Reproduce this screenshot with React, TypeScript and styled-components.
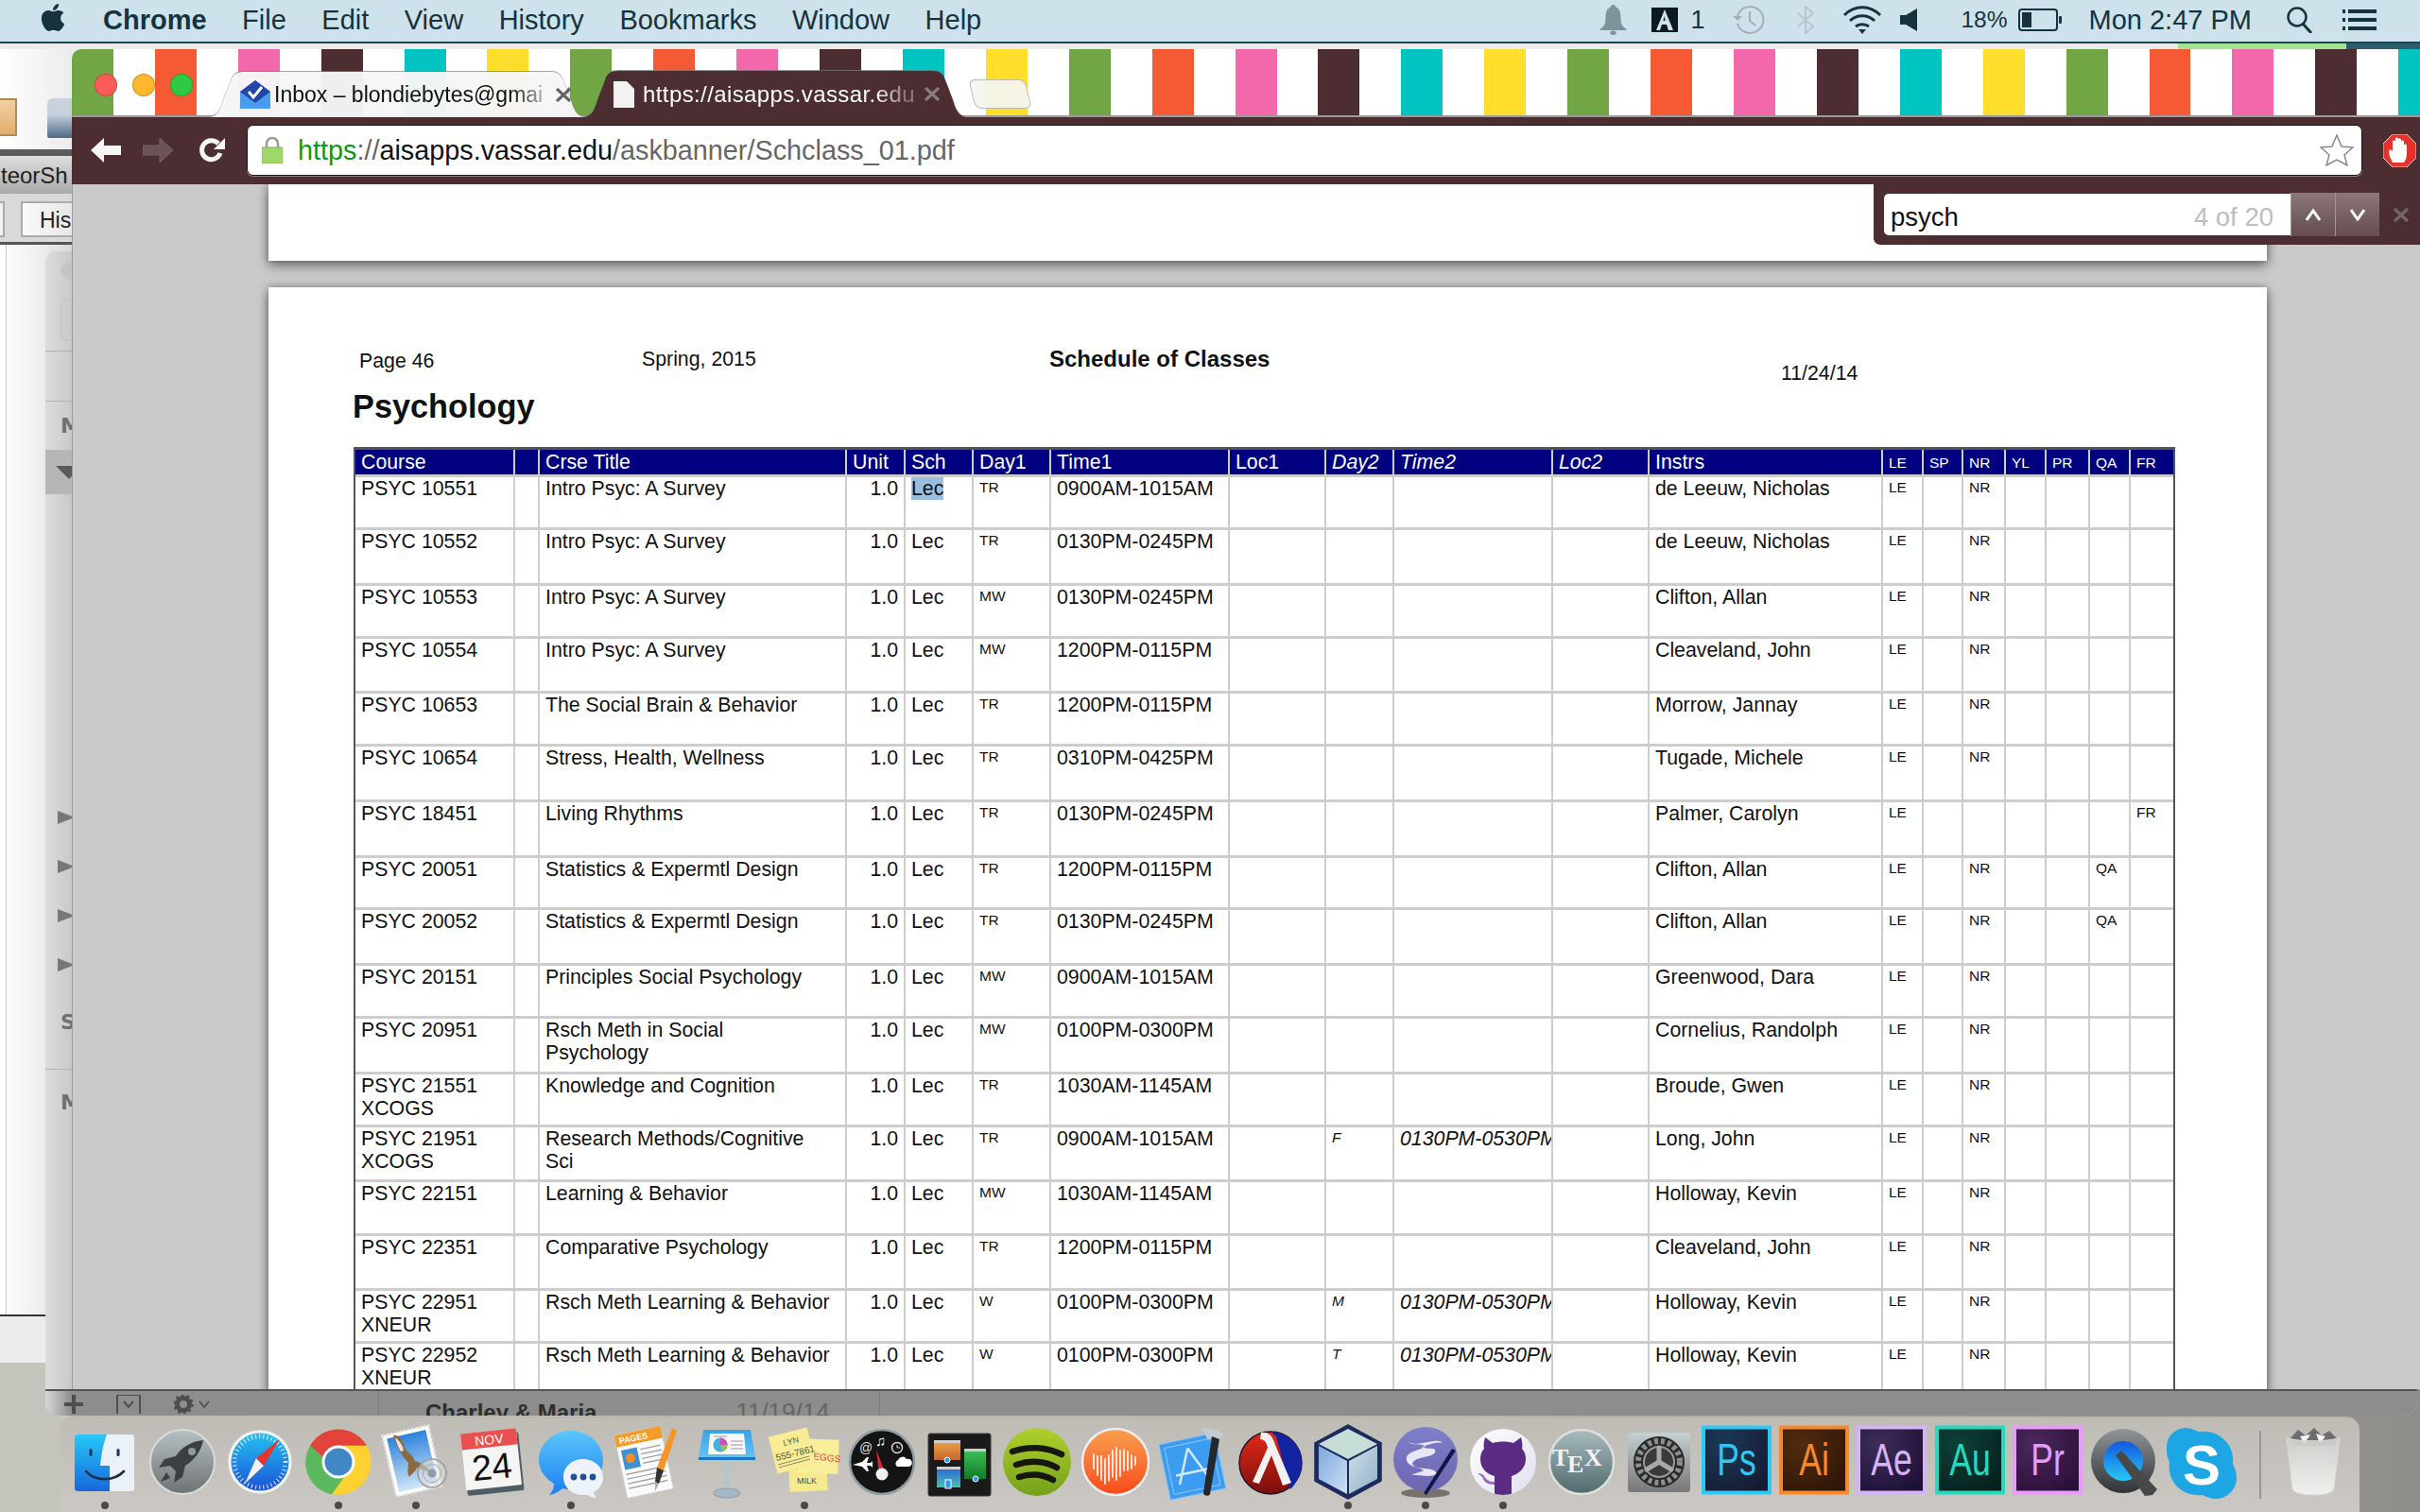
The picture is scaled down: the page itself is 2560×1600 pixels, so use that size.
import { ReactNode } from 'react';
import styled, { createGlobalStyle } from 'styled-components';
import { FaApple } from 'react-icons/fa';

const FONT = '"Liberation Sans", Arial, sans-serif';
const INK = '#16333d';
const PLUM = '#4b2d32';
const COLS = '169px 26px 325px 62px 72px 82px 189px 102px 72px 168px 102px 247px 43px 42px 45px 43px 46px 43px 45px';

type Course = {
  code: string;
  sub?: string;
  title: string;
  day: string;
  time: string;
  instr: string;
  h: number;
  day2?: string;
  time2?: string;
  nr?: boolean;
  qa?: boolean;
  fr?: boolean;
  picked?: boolean;
};

const COURSES: Course[] = [
  { code: 'PSYC 10551', title: 'Intro Psyc: A Survey', day: 'TR', time: '0900AM-1015AM', instr: 'de Leeuw, Nicholas', h: 56, picked: true },
  { code: 'PSYC 10552', title: 'Intro Psyc: A Survey', day: 'TR', time: '0130PM-0245PM', instr: 'de Leeuw, Nicholas', h: 59 },
  { code: 'PSYC 10553', title: 'Intro Psyc: A Survey', day: 'MW', time: '0130PM-0245PM', instr: 'Clifton, Allan', h: 56 },
  { code: 'PSYC 10554', title: 'Intro Psyc: A Survey', day: 'MW', time: '1200PM-0115PM', instr: 'Cleaveland, John', h: 58 },
  { code: 'PSYC 10653', title: 'The Social Brain & Behavior', day: 'TR', time: '1200PM-0115PM', instr: 'Morrow, Jannay', h: 56 },
  { code: 'PSYC 10654', title: 'Stress, Health, Wellness', day: 'TR', time: '0310PM-0425PM', instr: 'Tugade, Michele', h: 59 },
  { code: 'PSYC 18451', title: 'Living Rhythms', day: 'TR', time: '0130PM-0245PM', instr: 'Palmer, Carolyn', h: 59, nr: false, fr: true },
  { code: 'PSYC 20051', title: 'Statistics & Expermtl Design', day: 'TR', time: '1200PM-0115PM', instr: 'Clifton, Allan', h: 55, qa: true },
  { code: 'PSYC 20052', title: 'Statistics & Expermtl Design', day: 'TR', time: '0130PM-0245PM', instr: 'Clifton, Allan', h: 59, qa: true },
  { code: 'PSYC 20151', title: 'Principles Social Psychology', day: 'MW', time: '0900AM-1015AM', instr: 'Greenwood, Dara', h: 56 },
  { code: 'PSYC 20951', title: 'Rsch Meth in Social\nPsychology', day: 'MW', time: '0100PM-0300PM', instr: 'Cornelius, Randolph', h: 59 },
  { code: 'PSYC 21551', sub: 'XCOGS', title: 'Knowledge and Cognition', day: 'TR', time: '1030AM-1145AM', instr: 'Broude, Gwen', h: 56 },
  { code: 'PSYC 21951', sub: 'XCOGS', title: 'Research Methods/Cognitive\nSci', day: 'TR', time: '0900AM-1015AM', instr: 'Long, John', h: 58, day2: 'F', time2: '0130PM-0530PM' },
  { code: 'PSYC 22151', title: 'Learning & Behavior', day: 'MW', time: '1030AM-1145AM', instr: 'Holloway, Kevin', h: 57 },
  { code: 'PSYC 22351', title: 'Comparative Psychology', day: 'TR', time: '1200PM-0115PM', instr: 'Cleaveland, John', h: 58 },
  { code: 'PSYC 22951', sub: 'XNEUR', title: 'Rsch Meth Learning & Behavior', day: 'W', time: '0100PM-0300PM', instr: 'Holloway, Kevin', h: 56, day2: 'M', time2: '0130PM-0530PM' },
  { code: 'PSYC 22952', sub: 'XNEUR', title: 'Rsch Meth Learning & Behavior', day: 'W', time: '0100PM-0300PM', instr: 'Holloway, Kevin', h: 60, day2: 'T', time2: '0130PM-0530PM' },
];

const tabPath = (w: number, h: number) =>
  `path('M0 ${h} C10 ${h} 13 ${h - 8} 16 ${h - 18} L24 10 C26 3 30 0 38 0 L${w - 38} 0 C${w - 30} 0 ${w - 26} 3 ${w - 24} 10 L${w - 16} ${h - 18} C${w - 13} ${h - 8} ${w - 10} ${h} ${w} ${h} Z')`;

const GlobalStyle = createGlobalStyle`
  html, body { margin: 0; padding: 0; background: #b9b8b0; }
  * { box-sizing: border-box; }
`;

const Desktop = styled.div`
  position: relative;
  width: 2560px;
  height: 1600px;
  overflow: hidden;
  font-family: ${FONT};
  background: linear-gradient(90deg, #c6c5bd 0%, #b9b8b0 60%, #8e8d88 100%);
`;

const MenuBar = styled.header`
  position: relative;
  z-index: 5;
  display: flex;
  align-items: center;
  height: 46px;
  padding: 0 0 2px 42px;
  background: #cde2ea;
  border-bottom: 2px solid #1e4552;
  color: ${INK};
  font-size: 29px;
`;

const AppleMark = styled(FaApple)`
  width: 28px;
  height: 33px;
  margin: -6px 39px 0 0;
  color: ${INK};
`;

const MenuList = styled.nav`
  display: flex;
  gap: 37.5px;
`;

const MenuItem = styled.span<{ $bold?: boolean }>`
  font-weight: ${(p) => (p.$bold ? 700 : 400)};
`;

const Status = styled.div`
  display: flex;
  align-items: center;
  margin-left: auto;
  padding-right: 46px;
`;

const StatusSlot = styled.span<{ $ml: number; $size?: number }>`
  display: flex;
  align-items: center;
  margin-left: ${(p) => p.$ml}px;
  font-size: ${(p) => p.$size ?? 29}px;
`;

const PeekStrip = styled.div`
  position: absolute;
  top: 46px;
  left: 0;
  right: 0;
  height: 6px;
  display: flex;
  background: #2c5d6c;
`;

const PeekWhite = styled.div`
  width: 2304px;
  background: #ececec;
`;

const PeekGreen = styled.div`
  width: 178px;
  background: #a4e490;
`;

const BackWindow = styled.section`
  position: absolute;
  top: 52px;
  left: 0;
  width: 100px;
  height: 1390px;
  display: flex;
  flex-direction: column;
  background: linear-gradient(90deg, #fff, #e6e6e6);
`;

const BackIcons = styled.div`
  display: flex;
  gap: 32px;
  height: 106px;
  padding-top: 52px;
`;

const Folder = styled.div`
  width: 18px;
  height: 40px;
  border: 2px solid #b08a50;
  border-left: 0;
  background: linear-gradient(#f2cfa0, #e2ae70);
`;

const Bottle = styled.div`
  width: 30px;
  height: 42px;
  border-radius: 6px 6px 2px 2px;
  background: linear-gradient(#c7d2dc 40%, #4d6a86);
`;

const DarkRule = styled.div`
  height: 7px;
  background: #5c5c5c;
`;

const BackTitle = styled.div`
  height: 40px;
  line-height: 42px;
  overflow: hidden;
  white-space: nowrap;
  font-size: 24px;
  color: #222;
  background: linear-gradient(#dedede, #a9a9a9);
`;

const BackTitleText = styled.span`
  display: block;
  margin-left: 1px;
`;

const BackTabs = styled.div`
  display: flex;
  gap: 17px;
  height: 54px;
  padding-top: 8px;
  background: #d9d9d9;
  border-bottom: 3px solid #555;
`;

const BackTabStub = styled.div`
  width: 5px;
  height: 38px;
  background: #f1f1f1;
  border: 2px solid #aaa;
  border-left: 0;
`;

const BackTab = styled.div`
  width: 70px;
  height: 38px;
  padding-left: 18px;
  line-height: 36px;
  font-size: 23px;
  color: #222;
  background: linear-gradient(90deg, #fafafa, #e2e2e2);
  border: 2px solid #aaa;
`;

const BackBody = styled.div`
  flex: 1;
  margin-left: 6px;
  border-left: 1px dotted #c8c8c8;
  background: linear-gradient(90deg, #fdfdfd, #ededed 40%, #c8c8c8);
`;

const BackFoot = styled.div`
  height: 51px;
  border-top: 2px solid #333;
  background: #ececec;
`;

const SideWindow = styled.section`
  position: absolute;
  top: 266px;
  left: 48px;
  right: 3px;
  height: 1232px;
  display: flex;
  flex-direction: column;
  border-radius: 10px 10px 14px 14px;
  overflow: hidden;
  background: linear-gradient(90deg, #dcdcdc, #c9c9c9 28px);
`;

const SideRow = styled.div<{ $h: number; $line?: boolean; $active?: boolean }>`
  display: flex;
  align-items: center;
  height: ${(p) => p.$h}px;
  padding-left: 16px;
  font-family: "DejaVu Sans", sans-serif;
  font-weight: 700;
  font-size: 22px;
  color: #707070;
  border-bottom: ${(p) => (p.$line ? '1px solid #b2b2b2' : '0')};
  background: ${(p) => (p.$active ? '#b6b6b6' : 'transparent')};
`;

const SideOval = styled.div`
  width: 40px;
  height: 22px;
  border-radius: 50%;
  background: #c4c4c4;
`;

const SideField = styled.div`
  width: 40px;
  height: 43px;
  border: 1px solid #c0c0c0;
  border-radius: 6px;
`;

const ArrowDown = styled.div`
  width: 0;
  height: 0;
  margin-left: -5px;
  border-left: 14px solid transparent;
  border-right: 14px solid transparent;
  border-top: 14px solid #5a5a5a;
`;

const ArrowRight = styled.div`
  width: 0;
  height: 0;
  margin-left: -3px;
  border-top: 7px solid transparent;
  border-bottom: 7px solid transparent;
  border-left: 18px solid #777;
`;

const SideGap = styled.div`
  flex: 1;
`;

const SideFoot = styled.div`
  display: flex;
  align-items: flex-start;
  height: 28px;
  padding: 4px 0 0 20px;
  color: #4e4e4e;
  background: linear-gradient(90deg, #d8d8d8, #8d8d8d 28px);
  border-top: 2px solid #555;
`;

const FootIcons = styled.div`
  display: flex;
  align-items: center;
  gap: 35px;
  flex: none;
  width: 332px;
  height: 20px;
`;

const FootColumn = styled.div<{ $w: number }>`
  display: flex;
  align-items: baseline;
  gap: 147px;
  flex: none;
  width: ${(p) => p.$w}px;
  height: 30px;
  margin-top: -4px;
  padding: 7px 0 0 49px;
  border-left: 1px solid #7d7d7d;
  white-space: nowrap;
  font-size: 24px;
`;

const FootName = styled.b`
  color: #2e2e2e;
`;

const FootDate = styled.span`
  font-size: 26px;
  color: #666;
`;

const ChromeWindow = styled.main`
  position: absolute;
  top: 52px;
  left: 76px;
  width: 2484px;
  height: 1418px;
  display: flex;
  flex-direction: column;
  overflow: hidden;
  border-top-left-radius: 10px;
`;

const TabStrip = styled.div`
  display: flex;
  align-items: flex-end;
  height: 72px;
  flex: none;
  padding-left: 24px;
  box-shadow: inset 0 -2px #9b9b9b;
  background: repeating-linear-gradient(
    90deg,
    #72a544 0 44px, #fff 44px 87.9px,
    #f55a35 87.9px 131.9px, #fff 131.9px 175.8px,
    #f368ab 175.8px 219.8px, #fff 219.8px 263.7px,
    ${PLUM} 263.7px 307.7px, #fff 307.7px 351.6px,
    #00c4c2 351.6px 395.6px, #fff 395.6px 439.5px,
    #ffde2c 439.5px 483.5px, #fff 483.5px 527.4px
  );
`;

const Lights = styled.div`
  display: flex;
  gap: 16px;
  align-self: flex-start;
  margin: 26px 16px 0 0;
`;

const Light = styled.span<{ $c: string }>`
  width: 24px;
  height: 24px;
  border-radius: 50%;
  background: ${(p) => p.$c};
  box-shadow: inset 0 0 0 1px rgba(0, 0, 0, 0.2);
`;

const Tab = styled.div<{ $w: number; $on?: boolean }>`
  position: relative;
  display: flex;
  align-items: center;
  flex: none;
  width: ${(p) => p.$w}px;
  height: ${(p) => (p.$on ? 49 : 48)}px;
  margin-right: -4px;
  padding: 0 ${(p) => (p.$on ? 27 : 13)}px 0 ${(p) => (p.$on ? 33 : 34)}px;
  font-size: ${(p) => (p.$on ? 24 : 23)}px;
  letter-spacing: ${(p) => (p.$on ? 0.4 : 0)}px;
  color: ${(p) => (p.$on ? '#fff' : '#111')};
  filter: drop-shadow(0 -1px 0 rgba(120, 120, 120, 0.75));

  &::before {
    content: '';
    position: absolute;
    inset: 0;
    background: ${(p) => (p.$on ? PLUM : 'rgba(255, 255, 255, 0.9)')};
    clip-path: ${(p) => tabPath(p.$w, p.$on ? 49 : 48)};
  }
`;

const TabInner = styled.span<{ $gap: number }>`
  position: relative;
  display: flex;
  align-items: center;
  width: 100%;
  gap: ${(p) => p.$gap}px;
`;

const TabLabel = styled.span`
  flex: 1;
  overflow: hidden;
  white-space: nowrap;
  mask-image: linear-gradient(90deg, #000 86%, rgba(0, 0, 0, 0.35) 97%);
`;

const Cross = ({ color }: { color: string }) => (
  <svg width="22" height="15" viewBox="0 0 22 15" fill="none" stroke={color} strokeWidth="3.2">
    <path d="M4 1l14 13M18 1L4 14" />
  </svg>
);

const NewTab = styled.div`
  align-self: flex-start;
  width: 60px;
  height: 31px;
  margin: 32px 0 0 8px;
  border: 1px solid #bbb;
  border-radius: 7px;
  background: rgba(245, 245, 240, 0.94);
  transform: skewX(14deg);
`;

const Toolbar = styled.div`
  display: flex;
  align-items: center;
  flex: none;
  height: 71px;
  padding: 0 0 1px 20px;
  background: ${PLUM};
`;

const NavIcon = styled.svg<{ $ml: number }>`
  flex: none;
  margin-left: ${(p) => p.$ml}px;
`;

const Omnibox = styled.div`
  display: flex;
  align-items: center;
  flex: none;
  width: 2238px;
  height: 54px;
  margin-left: 23px;
  padding: 0 8px 0 15px;
  background: #fff;
  border-radius: 7px;
  border: 1px solid #1f1215;
  box-shadow: 0 1px 0 #8d7b7e;
  font-size: 28.8px;
`;

const UrlText = styled.span`
  margin-left: 16px;
  color: #666;
  white-space: nowrap;
`;

const UrlHttps = styled.span`
  color: #0a9a14;
`;

const UrlHost = styled.span`
  color: #111;
`;

const StarWrap = styled.svg`
  margin-left: auto;
`;

const Viewer = styled.div`
  position: relative;
  flex: 1;
  display: flex;
  flex-direction: column;
  gap: 28px;
  overflow: hidden;
  padding-left: 207px;
  background: #cacaca;
  border-left: 1px solid #9c9c9c;
`;

const FindBar = styled.div`
  position: absolute;
  z-index: 2;
  top: 0;
  right: 0;
  width: 578px;
  height: 64px;
  display: flex;
  align-items: center;
  padding-left: 11px;
  background: ${PLUM};
  border-bottom-left-radius: 7px;
`;

const FindField = styled.div`
  display: flex;
  align-items: center;
  justify-content: space-between;
  width: 430px;
  height: 44px;
  padding: 5px 18px 0 7px;
  font-size: 27.5px;
  color: #111;
  background: #fff;
  border-radius: 5px 0 0 5px;
`;

const FindCount = styled.span`
  color: #bdbdbd;
`;

const FindStep = styled.div`
  display: flex;
  align-items: center;
  justify-content: center;
  width: 47px;
  height: 46px;
  border-left: 1px solid #a59598;
  background: linear-gradient(#8b777a, #654c50);
`;

const FindClose = styled.span`
  display: flex;
  margin-left: 12px;
`;

const Page = styled.div<{ $h: number }>`
  flex: none;
  width: 2114px;
  height: ${(p) => p.$h}px;
  background: #fff;
  box-shadow: 0 5px 12px rgba(0, 0, 0, 0.42), 0 0 8px rgba(0, 0, 0, 0.3);
`;

const PageHead = styled.div`
  display: grid;
  grid-template-columns: 299px 431px 774px auto;
  height: 106px;
  padding: 64px 0 0 96px;
  font-size: 21.3px;
  line-height: 24px;
  color: #111;
`;

const HeadItem = styled.span<{ $down?: number; $bold?: boolean }>`
  margin-top: ${(p) => p.$down ?? 0}px;
  font-weight: ${(p) => (p.$bold ? 700 : 400)};
  font-size: ${(p) => (p.$bold ? 24 : 21.3)}px;
`;

const PageTitle = styled.h1`
  margin: 0 0 23px 89px;
  height: 40px;
  font-size: 34.3px;
  line-height: 40px;
  font-weight: 700;
  color: #111;
`;

const Table = styled.div`
  width: 1927px;
  margin-left: 90px;
  border: 2px solid #555;
  border-top-width: 3px;
  border-bottom: 0;
`;

const Row = styled.div<{ $h: number; $head?: boolean }>`
  display: grid;
  grid-template-columns: ${COLS};
  height: ${(p) => p.$h}px;
  border-bottom: 3px solid #cdcdcd;
  background: ${(p) => (p.$head ? '#000080' : '#fff')};
  color: ${(p) => (p.$head ? '#fff' : '#111')};
`;

const Cell = styled.div<{ $small?: boolean; $italic?: boolean; $right?: boolean; $drop?: number }>`
  overflow: hidden;
  padding: ${(p) => p.$drop ?? 0}px 6px 0 6px;
  border-right: 2px solid #cdcdcd;
  white-space: pre-line;
  font-size: ${(p) => (p.$small ? 15.5 : 21.3)}px;
  line-height: ${(p) => (p.$small ? 22 : 24)}px;
  font-style: ${(p) => (p.$italic ? 'italic' : 'normal')};
  text-align: ${(p) => (p.$right ? 'right' : 'left')};

  &:last-child {
    border-right: 0;
  }
`;

const NoWrap = styled.span`
  white-space: nowrap;
`;

const Picked = styled.span`
  background: #99bfe0;
`;

const Dock = styled.footer`
  position: absolute;
  z-index: 4;
  top: 1499px;
  left: 64px;
  width: 2432px;
  height: 101px;
  display: flex;
  padding: 8px 0 0 6px;
  border-radius: 14px 14px 0 0;
  border-top: 1px solid #b5b1ab;
  background: linear-gradient(#bfbbb5, #cbc8c3);
`;

const DockSlot = styled.div`
  display: flex;
  flex-direction: column;
  align-items: center;
  flex: none;
  width: 82.2px;
`;

const DockArt = styled.svg`
  display: block;
  width: 80px;
  height: 80px;
  overflow: visible;
  font-family: ${FONT};
`;

const DockDot = styled.span<{ $on?: boolean }>`
  width: 8px;
  height: 8px;
  margin-top: 1px;
  border-radius: 50%;
  background: ${(p) => (p.$on ? '#4d4a46' : 'transparent')};
`;

const DockRule = styled.div`
  flex: none;
  width: 2px;
  height: 72px;
  margin: 6px 14px 0 19px;
  background: #9a9792;
`;

const Adobe = ({ id, name, main, deep }: { id: string; name: string; main: string; deep: string }) => (
  <DockArt viewBox="0 0 80 80">
    <defs>
      <radialGradient id={id} cx="30%" cy="25%" r="90%">
        <stop offset="0" stopColor={main} stopOpacity="0.18" />
        <stop offset="1" stopColor={main} stopOpacity="0" />
      </radialGradient>
    </defs>
    <rect x="5" y="2.5" width="70" height="69" fill={deep} stroke={main} strokeWidth="4" />
    <rect x="7" y="4.5" width="66" height="65" fill={`url(#${id})`} />
    <text transform="translate(40 53) scale(0.74 1)" textAnchor="middle" fontSize="48" fill={main}>{name}</text>
  </DockArt>
);

type DockEntry = { id: string; dot?: boolean; art: ReactNode };

const DOCK: DockEntry[] = [
  {
    id: 'finder',
    dot: true,
    art: (
      <DockArt viewBox="0 0 80 80">
        <defs>
          <linearGradient id="fb" x1="0" y1="0" x2="0" y2="1">
            <stop offset="0" stopColor="#26c8fa" />
            <stop offset="1" stopColor="#1668d8" />
          </linearGradient>
        </defs>
        <rect x="8" y="10" width="63" height="60" rx="3" fill="#eaf1f8" />
        <path d="M11 10h31c-4 10-6 22-7 33h10v27H11a3 3 0 0 1-3-3V13a3 3 0 0 1 3-3z" fill="url(#fb)" />
        <rect x="23.5" y="25" width="3" height="8" rx="1.5" fill="#1c3550" />
        <rect x="52.5" y="25" width="3" height="8" rx="1.5" fill="#1c3550" />
        <path d="M20 49c10 11 29 11 40 0" fill="none" stroke="#1c2c40" strokeWidth="2.6" strokeLinecap="round" />
      </DockArt>
    ),
  },
  {
    id: 'launchpad',
    art: (
      <DockArt viewBox="0 0 80 80">
        <defs>
          <linearGradient id="lp" x1="0" y1="0" x2="0" y2="1">
            <stop offset="0" stopColor="#b5c1c4" />
            <stop offset="1" stopColor="#6f7172" />
          </linearGradient>
        </defs>
        <circle cx="40" cy="39" r="34" fill="url(#lp)" stroke="#d8dcdc" strokeWidth="2" />
        <path d="M62 16c-12 1-23 7-29 17l-12 3-6 9 12-2 6 6-2 12 9-6 3-12c10-6 17-16 19-27z" fill="#3d4043" />
        <path d="M23 50l-6 10 10-4z" fill="#3d4043" />
        <circle cx="50" cy="28" r="4" fill="#8f9a9c" />
      </DockArt>
    ),
  },
  {
    id: 'safari',
    art: (
      <DockArt viewBox="0 0 80 80">
        <defs>
          <linearGradient id="sf" x1="0" y1="0" x2="0" y2="1">
            <stop offset="0" stopColor="#24c2f0" />
            <stop offset="1" stopColor="#1a52d8" />
          </linearGradient>
        </defs>
        <circle cx="40" cy="39" r="34" fill="#f4f4f4" stroke="#c9c9c9" />
        <circle cx="40" cy="39" r="30.5" fill="url(#sf)" />
        <circle cx="40" cy="39" r="27" fill="none" stroke="#fff" strokeWidth="4.5" strokeDasharray="1 3.2" opacity="0.85" />
        <path d="M44 43l-20 19 12-27z" fill="#f2f2f2" />
        <path d="M36 35l25-20-17 28z" fill="#e4352e" />
      </DockArt>
    ),
  },
  {
    id: 'chrome',
    dot: true,
    art: (
      <DockArt viewBox="0 0 80 80">
        <g transform="translate(0 -1)">
          <circle cx="40" cy="40" r="34.5" fill="#fdd130" />
          <path d="M10.1 22.7A34.5 34.5 0 0 0 33 74.3L52 48 25 32z" fill="#5bb85c" />
          <path d="M10.1 22.7A34.5 34.5 0 0 1 69.9 22.7H40L25 36z" fill="#e2433a" />
          <circle cx="40" cy="40" r="17.5" fill="#fff" />
          <circle cx="40" cy="40" r="14.5" fill="#3f88c5" />
        </g>
      </DockArt>
    ),
  },
  {
    id: 'mail',
    dot: true,
    art: (
      <DockArt viewBox="0 0 80 80">
        <defs>
          <linearGradient id="ml" x1="0" y1="0" x2="0" y2="1">
            <stop offset="0" stopColor="#2f82dc" />
            <stop offset="1" stopColor="#cfe6f6" />
          </linearGradient>
        </defs>
        <g transform="translate(0 -3)">
          <g transform="rotate(-13 36 40)">
            <rect x="11" y="8" width="50" height="66" fill="#fff" stroke="#e4e4e4" strokeWidth="2.5" strokeDasharray="2.5 2" />
            <rect x="15" y="12" width="42" height="58" fill="url(#ml)" />
          </g>
          <path d="M16 14c5-1 10 4 12 12 2 6 8 7 11 15 5 1 14 7 17 12-6-1-10-3-15-5-1 5-6 6-8 10-3-5-1-10-1-15-6-7-12-15-16-29z" fill="#8a6a42" />
          <path d="M18 16c4 3 8 8 9 14l-3 1c-3-5-5-10-6-15z" fill="#e7e2d6" />
          <circle cx="57" cy="54" r="15" fill="#dcdcdc" fillOpacity="0.55" stroke="#9c9c9c" strokeWidth="1.6" />
          <circle cx="57" cy="54" r="9.5" fill="none" stroke="#a8a8a8" strokeWidth="1" />
          <circle cx="57" cy="54" r="4.5" fill="#8f9aa5" />
        </g>
      </DockArt>
    ),
  },
  {
    id: 'calendar',
    art: (
      <DockArt viewBox="0 0 80 80">
        <g transform="translate(0 -4) rotate(-6 40 40)">
          <rect x="9" y="14" width="60" height="62" rx="2" fill="#4f5d66" />
          <rect x="8" y="10" width="59" height="60" fill="#f5f5f5" />
          <rect x="8" y="10" width="59" height="17" fill="#e9504f" />
          <text x="37.5" y="24" textAnchor="middle" fontSize="14" fill="#fff">NOV</text>
          <text x="37.5" y="61" textAnchor="middle" fontSize="38" fill="#111">24</text>
        </g>
      </DockArt>
    ),
  },
  {
    id: 'messages',
    dot: true,
    art: (
      <DockArt viewBox="0 0 80 80">
        <defs>
          <linearGradient id="ms" x1="0" y1="0" x2="0" y2="1">
            <stop offset="0" stopColor="#5bc6fb" />
            <stop offset="1" stopColor="#1b7ff0" />
          </linearGradient>
        </defs>
        <path d="M40 6c19 0 34 14 34 31 0 18-15 31-34 31-3 0-6 0-9-1-3 3-8 6-14 7 3-3 5-7 5-12C12 56 6 47 6 37 6 20 21 6 40 6z" fill="url(#ms)" />
        <path d="M53 36c12 0 21 9 21 19 0 7-4 13-10 16 0 2 1 4 3 6-4 0-7-1-9-3-2 0-3 0-5 0-12 0-21-8-21-19s9-19 21-19z" fill="#eef3fa" />
        <circle cx="43" cy="55" r="3.4" fill="#24508e" />
        <circle cx="53" cy="55" r="3.4" fill="#24508e" />
        <circle cx="63" cy="55" r="3.4" fill="#24508e" />
      </DockArt>
    ),
  },
  {
    id: 'pages',
    art: (
      <DockArt viewBox="0 0 80 80">
        <g transform="translate(0 -3)">
          <g transform="rotate(-12 36 42)">
            <rect x="10" y="8" width="50" height="68" fill="#fafafa" stroke="#ccc" />
            <rect x="10" y="8" width="50" height="13" fill="#f59b2c" />
            <text x="14" y="18" fontSize="9" fontWeight="700" fill="#fff">PAGES</text>
            <rect x="14" y="25" width="17" height="21" fill="#3f8fd4" />
            <circle cx="22" cy="35" r="5" fill="#f0902c" />
            <path d="M34 28h22M34 33h22M34 38h22M34 43h22M14 51h42M14 56h42M14 61h42M14 66h42" stroke="#9a9a9a" strokeWidth="1.2" />
          </g>
          <path d="M65 6l5 3-14 42-7-3z" fill="#f5962a" />
          <path d="M49 48l7 3-5 14-4-2z" fill="#33302d" />
          <path d="M47 63l4 2-4 8z" fill="#aaa" />
        </g>
      </DockArt>
    ),
  },
  {
    id: 'keynote',
    art: (
      <DockArt viewBox="0 0 80 80">
        <defs>
          <linearGradient id="kn" x1="0" y1="0" x2="0" y2="1">
            <stop offset="0" stopColor="#3ba1e8" />
            <stop offset="1" stopColor="#60c2f4" />
          </linearGradient>
        </defs>
        <path d="M15 5h50l5 29H10z" fill="url(#kn)" />
        <rect x="10" y="34" width="60" height="3" fill="#1a78c0" />
        <path d="M22 9h36l2 22H20z" fill="#f7f7f7" />
        <circle cx="33" cy="21" r="7.5" fill="#46b0e0" />
        <path d="M33 21v-7.500a7.500 7.500 0 0 1 7.500 7.500z" fill="#d24eb0" />
        <path d="M33 21h7.500a7.500 7.500 0 0 1-5.500 7.200z" fill="#8ac64a" />
        <path d="M44 17h13M44 21h13M44 25h13M26 12h14" stroke="#999" strokeWidth="1" />
        <rect x="37.500" y="37" width="5" height="33" fill="#b6c4cf" />
        <ellipse cx="40" cy="72" rx="14" ry="5" fill="#a5b8c6" stroke="#8a9cab" />
      </DockArt>
    ),
  },
  {
    id: 'stickies',
    dot: true,
    art: (
      <DockArt viewBox="0 0 80 80" fontFamily="cursive">
        <rect x="24" y="46" width="40" height="24" fill="#f6e98e" transform="rotate(-3 44 58)" />
        <text x="32" y="62" fontSize="9" fill="#3d4a6a">MILK</text>
        <rect x="34" y="15" width="42" height="36" fill="#f9ee9a" transform="rotate(2 55 33)" />
        <text x="49" y="37" fontSize="10" fill="#e2483a" transform="rotate(6 55 37)">EGGS</text>
        <rect x="6" y="7" width="42" height="40" fill="#f8ec95" transform="rotate(-14 27 27)" />
        <text x="18" y="20" fontSize="9" fill="#545a3a" transform="rotate(-14 27 20)">LYN</text>
        <text x="10" y="34" fontSize="10" fill="#545a3a" transform="rotate(-14 27 34)">555-7861</text>
        <path d="M12 42l33-9M13 45l33-9" stroke="#8a8a6a" strokeWidth="1" />
      </DockArt>
    ),
  },
  {
    id: 'dashboard',
    art: (
      <DockArt viewBox="0 0 80 80">
        <circle cx="40" cy="39" r="34" fill="#141414" stroke="#8f9ea5" strokeWidth="2.6" />
        <text x="16" y="29" fontSize="14" fill="#ddd">@</text>
        <text x="33" y="22" fontSize="15" fill="#fff">♫</text>
        <circle cx="56" cy="24" r="5.500" fill="none" stroke="#ddd" strokeWidth="1.400" />
        <path d="M56 21v3h3" fill="none" stroke="#ddd" />
        <path d="M9 42l10-3 5-5h2l-2 6 4 0 2-2v7l-2-2-4 0 2 6h-2l-5-5-10-2z" fill="#fff" />
        <path d="M56 44a4 4 0 0 1 1-7 5 5 0 0 1 9-1 4 4 0 0 1 3 8z" fill="#fff" />
        <path d="M34 26l10 26-7 1z" fill="#d7282f" />
        <circle cx="40" cy="52" r="6.500" fill="#f0f0f0" />
      </DockArt>
    ),
  },
  {
    id: 'mission',
    art: (
      <DockArt viewBox="0 0 80 80">
        <defs>
          <linearGradient id="mc1" x1="0" y1="0" x2="0" y2="1"><stop offset="0" stopColor="#f0a44a" /><stop offset="1" stopColor="#c4682c" /></linearGradient>
          <linearGradient id="mc2" x1="0" y1="0" x2="0" y2="1"><stop offset="0" stopColor="#3fc45a" /><stop offset="1" stopColor="#117a2a" /></linearGradient>
          <linearGradient id="mc3" x1="0" y1="0" x2="0" y2="1"><stop offset="0" stopColor="#2a5fd8" /><stop offset="1" stopColor="#49c2b8" /></linearGradient>
        </defs>
        <rect x="7" y="9" width="66" height="66" rx="2" fill="#1a1a1a" stroke="#3a3a3a" />
        <rect x="13" y="16" width="28" height="21" fill="url(#mc1)" />
        <rect x="13" y="16" width="28" height="3" fill="#cfcfcf" />
        <rect x="45" y="25" width="23" height="32" fill="url(#mc2)" />
        <rect x="45" y="25" width="23" height="3" fill="#cfcfcf" />
        <rect x="16" y="44" width="25" height="22" fill="url(#mc3)" />
        <rect x="16" y="44" width="25" height="3" fill="#cfcfcf" />
        <circle cx="27" cy="37" r="3" fill="#2e9bf0" stroke="#fff" />
        <circle cx="57" cy="57" r="3" fill="#2e9bf0" stroke="#fff" />
        <rect x="25" y="58" width="6" height="9" fill="#2e9bf0" stroke="#fff" />
      </DockArt>
    ),
  },
  {
    id: 'spotify',
    art: (
      <DockArt viewBox="0 0 80 80">
        <defs>
          <linearGradient id="sp" x1="0" y1="0" x2="0" y2="1"><stop offset="0" stopColor="#b0d02c" /><stop offset="1" stopColor="#74a01a" /></linearGradient>
        </defs>
        <circle cx="40" cy="39" r="36" fill="url(#sp)" />
        <path d="M14 28c17-6 36-5 52 3M18 42c15-5 31-4 43 3M21 55c12-4 25-3 36 3" fill="none" stroke="#17170f" strokeWidth="6.500" strokeLinecap="round" />
      </DockArt>
    ),
  },
  {
    id: 'sound',
    art: (
      <DockArt viewBox="0 0 80 80">
        <defs>
          <linearGradient id="sc" x1="0" y1="0" x2="0" y2="1"><stop offset="0" stopColor="#f8a050" /><stop offset="1" stopColor="#fa4a1a" /></linearGradient>
        </defs>
        <circle cx="40" cy="39" r="35" fill="url(#sc)" stroke="#eee" strokeWidth="2.500" />
        <path d="M17 31v15M21 33v20M25 33v25M29 36v26M33 32v27M37 27v28M41 24v34M45 27v27M49 26v22M53 28v20M57 32v14M61 34v8" stroke="#fff" strokeWidth="1.800" strokeLinecap="round" opacity="0.9" />
      </DockArt>
    ),
  },
  {
    id: 'xcode',
    art: (
      <DockArt viewBox="0 0 80 80">
        <g transform="rotate(-12 38 42)">
          <rect x="9" y="14" width="60" height="60" fill="#3b9cf0" stroke="#8cc8f8" />
          <path d="M14 19h50v50H14z" fill="none" stroke="#9cd0fa" strokeWidth="0.800" />
          <path d="M38 24L22 60M38 24l16 36M20 50h36" stroke="#cfe8fc" strokeWidth="2.500" fill="none" />
        </g>
        <path d="M50 4c8-2 18 2 22 6l-4 6c-4-3-9-3-12 0z" fill="#c4ccd2" />
        <path d="M60 12l8 3-10 58c-1 3-7 2-7-1z" fill="#24282c" />
      </DockArt>
    ),
  },
  {
    id: 'lambda',
    art: (
      <DockArt viewBox="0 0 80 80">
        <defs>
          <linearGradient id="lb" x1="0" y1="0" x2="0" y2="1"><stop offset="0" stopColor="#e42a1a" /><stop offset="1" stopColor="#7a0e0a" /></linearGradient>
        </defs>
        <circle cx="40" cy="40" r="33" fill="url(#lb)" stroke="#20152a" strokeWidth="1.500" />
        <path d="M40 7a33 33 0 0 1 33 33c0 14-8 24-12 28L46 12z" fill="#1224a0" />
        <path d="M30 8c8-1 12 3 15 13l17 40-9 3-12-32-13 30-7-2 16-36c-1-6-4-9-8-9z" fill="#f2f2f2" />
      </DockArt>
    ),
  },
  {
    id: 'vbox',
    dot: true,
    art: (
      <DockArt viewBox="0 0 80 80">
        <defs>
          <linearGradient id="vb" x1="0" y1="0" x2="1" y2="1"><stop offset="0" stopColor="#7da8e0" /><stop offset="1" stopColor="#cfe0f4" /></linearGradient>
          <linearGradient id="vr" x1="0" y1="0" x2="1" y2="1"><stop offset="0" stopColor="#cfe0e8" /><stop offset="1" stopColor="#8fb0c8" /></linearGradient>
        </defs>
        <path d="M40 0l35 19v40L40 78 5 59V19z" fill="#1d2a5c" stroke="#1d2a5c" strokeWidth="1.500" strokeLinejoin="round" />
        <path d="M40 4L71 20 40 36 9 20z" fill="#c6ddd8" />
        <path d="M9 22l30 16v35L9 57z" fill="url(#vb)" />
        <path d="M71 22L41 38v35l30-16z" fill="url(#vr)" />
      </DockArt>
    ),
  },
  {
    id: 'emacs',
    dot: true,
    art: (
      <DockArt viewBox="0 0 80 80">
        <ellipse cx="40" cy="72" rx="26" ry="5" fill="#77736c" />
        <defs>
          <linearGradient id="em" x1="0" y1="0" x2="0" y2="1"><stop offset="0" stopColor="#7d7fcb" /><stop offset="1" stopColor="#7065b0" /></linearGradient>
        </defs>
        <circle cx="40" cy="36" r="34" fill="url(#em)" />
        <path d="M22 18c10 6 30-6 36 1-6-2-16 2-22 4 6 4 16-1 14 6-4 6-22 4-24 12 4 8 22 2 26 10-6 6-18 1-28 2 6-2 12-4 14-5-6-4-20-4-18-14 2-7 18-8 20-12-6-3-14 0-18-4z" fill="#e9e6f4" />
        <path d="M72 27L41 74l-3-2 30-47z" fill="#10184a" />
      </DockArt>
    ),
  },
  {
    id: 'github',
    dot: true,
    art: (
      <DockArt viewBox="0 0 80 80">
        <defs>
          <linearGradient id="gh" x1="0" y1="0" x2="1" y2="1"><stop offset="0" stopColor="#fff" /><stop offset="1" stopColor="#dfe0f0" /></linearGradient>
          <clipPath id="ghc"><circle cx="40" cy="39" r="35" /></clipPath>
        </defs>
        <circle cx="40" cy="39" r="35" fill="url(#gh)" />
        <g clipPath="url(#ghc)" fill="#5a2c84">
          <path d="M21 13l8 6c7-2 15-2 22 0l8-6c1 4 2 8 1 12 3 3 4 7 4 11 0 10-8 16-15 18v24H31V54c-8-2-15-8-15-18 0-4 1-8 4-11-1-4 0-8 1-12z" />
          <path d="M31 60c-6 0-8-2-11-6-1-2-4-3-7-3 2 2 5 3 6 6s5 6 12 6z" fill="#9a6ab4" />
        </g>
      </DockArt>
    ),
  },
  {
    id: 'tex',
    art: (
      <DockArt viewBox="0 0 80 80">
        <defs>
          <linearGradient id="tx" x1="0" y1="0" x2="0" y2="1"><stop offset="0" stopColor="#a9bcc0" /><stop offset="1" stopColor="#506a6e" /></linearGradient>
        </defs>
        <circle cx="40" cy="39" r="34" fill="url(#tx)" stroke="#dfdfdc" strokeWidth="2.500" />
        <text x="9" y="43" fontFamily='"Liberation Serif", serif' fontSize="26" fontWeight="700" fill="#f2f2f2">T</text>
        <text x="25" y="50" fontFamily='"Liberation Serif", serif' fontSize="26" fontWeight="700" fill="#f2f2f2">E</text>
        <text x="43" y="43" fontFamily='"Liberation Serif", serif' fontSize="26" fontWeight="700" fill="#f2f2f2">X</text>
      </DockArt>
    ),
  },
  {
    id: 'prefs',
    art: (
      <DockArt viewBox="0 0 80 80">
        <defs>
          <linearGradient id="pf" x1="0" y1="0" x2="0" y2="1"><stop offset="0" stopColor="#c4d0d2" /><stop offset="1" stopColor="#777" /></linearGradient>
        </defs>
        <rect x="7" y="8" width="66" height="63" rx="3" fill="url(#pf)" />
        <circle cx="40" cy="39" r="27" fill="#2a2a2a" />
        <circle cx="40" cy="39" r="22" fill="none" stroke="#8e8e8e" strokeWidth="6" strokeDasharray="4 3" />
        <circle cx="40" cy="39" r="16" fill="#3a3a3a" stroke="#9a9a9a" strokeWidth="2" />
        <path d="M40 39V24M40 39l13 8M40 39l-13 8" stroke="#a8a8a8" strokeWidth="5" strokeLinecap="round" />
      </DockArt>
    ),
  },
  { id: 'ps', art: <Adobe id="ps" name="Ps" main="#2ec9f3" deep="#161a33" /> },
  { id: 'ai', art: <Adobe id="ai" name="Ai" main="#f68a2a" deep="#2e1608" /> },
  { id: 'ae', art: <Adobe id="ae" name="Ae" main="#d4b4f4" deep="#1d1036" /> },
  { id: 'au', art: <Adobe id="au" name="Au" main="#28d8bc" deep="#07201c" /> },
  { id: 'pr', art: <Adobe id="pr" name="Pr" main="#e69cf8" deep="#2a0f38" /> },
  {
    id: 'quicktime',
    art: (
      <DockArt viewBox="0 0 80 80">
        <defs>
          <linearGradient id="qr" x1="0" y1="0" x2="0" y2="1"><stop offset="0" stopColor="#8f959a" /><stop offset="1" stopColor="#303234" /></linearGradient>
          <linearGradient id="qb" x1="0" y1="0" x2="0" y2="1"><stop offset="0" stopColor="#1258e0" /><stop offset="1" stopColor="#28c8f4" /></linearGradient>
        </defs>
        <circle cx="38" cy="38" r="34" fill="url(#qr)" />
        <circle cx="38" cy="38" r="21" fill="url(#qb)" />
        <path d="M30 32l6-5 38 41-5 6-8 1z" fill="#46484a" />
      </DockArt>
    ),
  },
  {
    id: 'skype',
    art: (
      <DockArt viewBox="0 0 80 80">
        <path d="M22 3c6 0 11 3 14 4 22-3 38 14 36 34 3 6 4 10 4 15 0 12-10 22-22 22-5 0-10-2-14-4C18 76 2 60 5 39 2 33 2 29 2 23 2 12 11 3 22 3z" fill="#1ca6e4" />
        <text x="39" y="63" textAnchor="middle" fontSize="60" fontWeight="700" fill="#fff">S</text>
      </DockArt>
    ),
  },
];

const Trash = () => (
  <DockArt viewBox="0 0 80 80">
    <defs>
      <linearGradient id="tr" x1="0" y1="0" x2="0" y2="1">
        <stop offset="0" stopColor="#cfcfcd" />
        <stop offset="1" stopColor="#f3f3f2" />
      </linearGradient>
    </defs>
    <path d="M16 14l8-9 8 6 9-8 8 8 8-5 8 8-2 8H18z" fill="#6a6e70" />
    <path d="M26 12l5 8 6-10zM43 9l4 11 6-8z" fill="#f2f2f2" />
    <path d="M34 14l4 5-6 1zM52 13l3 6-6 1z" fill="#b4533f" />
    <path d="M12 13c8 5 48 5 56 0l-6 54c-1 5-11 7-22 7s-21-2-22-7z" fill="url(#tr)" fillOpacity="0.92" stroke="#dcdcdb" />
  </DockArt>
);

const App = () => (
  <Desktop>
    <GlobalStyle />
    <MenuBar>
      <AppleMark />
      <MenuList>
        <MenuItem $bold>Chrome</MenuItem>
        <MenuItem>File</MenuItem>
        <MenuItem>Edit</MenuItem>
        <MenuItem>View</MenuItem>
        <MenuItem>History</MenuItem>
        <MenuItem>Bookmarks</MenuItem>
        <MenuItem>Window</MenuItem>
        <MenuItem>Help</MenuItem>
      </MenuList>
      <Status>
        <StatusSlot $ml={0}>
          <svg width="31" height="32" viewBox="0 0 31 32" fill="#7e949b">
            <path d="M15.500 0c1.700 0 2.700 1 2.700 2.600 4.300 1.500 5.300 6 5.300 11.400 0 6 1.500 9.300 6 11.600V27H1.500v-1.400c4.500-2.300 6-5.600 6-11.600 0-5.400 1-9.900 5.300-11.400C12.800 1 13.800 0 15.500 0z" />
            <ellipse cx="15.500" cy="29.800" rx="3.200" ry="2.200" />
          </svg>
        </StatusSlot>
        <StatusSlot $ml={25}>
          <svg width="28" height="26" viewBox="0 0 28 26">
            <rect width="28" height="26" fill="#0c1a20" />
            <path d="M14 2l9 22h-5l-2-6h-7l2-4h3.500L14 9 9 24H5z" fill="#cde2ea" />
          </svg>
        </StatusSlot>
        <StatusSlot $ml={13} $size={27}>1</StatusSlot>
        <StatusSlot $ml={29}>
          <svg width="36" height="32" viewBox="0 0 36 32" fill="none" stroke="#9fb2b9" strokeWidth="2">
            <path d="M6 12a14 14 0 1 1 0 8" />
            <path d="M19 7v10l6 5" />
            <path d="M1 12l5 5 5-5z" fill="#9fb2b9" stroke="none" />
          </svg>
        </StatusSlot>
        <StatusSlot $ml={31}>
          <svg width="22" height="30" viewBox="0 0 22 30" fill="none" stroke="#b4c7ce" strokeWidth="2">
            <path d="M3 8l16 14-8 7V1l8 7L3 22" />
          </svg>
        </StatusSlot>
        <StatusSlot $ml={28}>
          <svg width="42" height="30" viewBox="0 0 42 30" fill="none" stroke={INK} strokeWidth="3">
            <path d="M2 10c11-11 27-11 38 0M8 16c7-7 19-7 26 0M14 22c4-3 10-3 14 0" />
            <path d="M17 25h8l-4 5z" fill={INK} stroke="none" />
          </svg>
        </StatusSlot>
        <StatusSlot $ml={19}>
          <svg width="18" height="24" viewBox="0 0 18 24" fill={INK}>
            <path d="M0 7h6l12-7v24L6 17H0z" />
          </svg>
        </StatusSlot>
        <StatusSlot $ml={46} $size={24.500}>18%</StatusSlot>
        <StatusSlot $ml={11}>
          <svg width="46" height="24" viewBox="0 0 46 24">
            <rect x="1" y="1" width="40" height="22" rx="3" fill="none" stroke={INK} strokeWidth="2" />
            <rect x="4" y="4" width="10" height="16" fill={INK} />
            <rect x="43" y="8" width="3" height="8" rx="1" fill={INK} />
          </svg>
        </StatusSlot>
        <StatusSlot $ml={29}>Mon 2:47 PM</StatusSlot>
        <StatusSlot $ml={37}>
          <svg width="28" height="28" viewBox="0 0 28 28" fill="none" stroke={INK} strokeWidth="2.500">
            <circle cx="11" cy="11" r="9.500" />
            <path d="M17 18l9 10" strokeWidth="3" />
          </svg>
        </StatusSlot>
        <StatusSlot $ml={31}>
          <svg width="36" height="22" viewBox="0 0 36 22" fill={INK}>
            <rect width="3" height="4" />
            <rect y="9" width="3" height="4" />
            <rect y="18" width="3" height="4" />
            <rect x="6" width="30" height="4" />
            <rect x="6" y="9" width="30" height="4" />
            <rect x="6" y="18" width="30" height="4" />
          </svg>
        </StatusSlot>
      </Status>
    </MenuBar>

    <PeekStrip>
      <PeekWhite />
      <PeekGreen />
    </PeekStrip>

    <BackWindow>
      <BackIcons>
        <Folder />
        <Bottle />
      </BackIcons>
      <DarkRule />
      <BackTitle><BackTitleText>teorSh</BackTitleText></BackTitle>
      <BackTabs>
        <BackTabStub />
        <BackTab>His</BackTab>
      </BackTabs>
      <BackBody />
      <BackFoot />
    </BackWindow>

    <SideWindow>
      <SideRow $h={40}><SideOval /></SideRow>
      <SideRow $h={66} $line><SideField /></SideRow>
      <SideRow $h={53} $line />
      <SideRow $h={51}>M</SideRow>
      <SideRow $h={47} $active><ArrowDown /></SideRow>
      <SideRow $h={316} />
      <SideRow $h={52}><ArrowRight /></SideRow>
      <SideRow $h={52}><ArrowRight /></SideRow>
      <SideRow $h={52}><ArrowRight /></SideRow>
      <SideRow $h={52}><ArrowRight /></SideRow>
      <SideRow $h={68}>S</SideRow>
      <SideRow $h={17} $line />
      <SideRow $h={68}>M</SideRow>
      <SideGap />
      <SideFoot>
        <FootIcons>
          <svg width="20" height="20" viewBox="0 0 20 20" fill="#4e4e4e">
            <rect x="8" width="4" height="20" />
            <rect y="8" width="20" height="4" />
          </svg>
          <svg width="26" height="20" viewBox="0 0 26 20" fill="none" stroke="#4e4e4e" strokeWidth="2">
            <path d="M1 20V0h24v20" />
            <path d="M8 7l5 6 5-6" />
          </svg>
          <svg width="40" height="20" viewBox="0 0 40 20" fill="#4e4e4e">
            <circle cx="10" cy="10" r="6.500" fill="none" stroke="#4e4e4e" strokeWidth="5" />
            <circle cx="10" cy="10" r="9.500" fill="none" stroke="#4e4e4e" strokeWidth="2.500" strokeDasharray="3 3" />
            <path d="M27 7l5 6 5-6" fill="none" stroke="#4e4e4e" strokeWidth="1.600" />
          </svg>
        </FootIcons>
        <FootColumn $w={530}>
          <FootName>Charley &amp; Maria</FootName>
          <FootDate>11/19/14</FootDate>
        </FootColumn>
        <FootColumn $w={60} />
      </SideFoot>
    </SideWindow>

    <ChromeWindow>
      <TabStrip>
        <Lights>
          <Light $c="#fc5b57" />
          <Light $c="#fdb72f" />
          <Light $c="#2dcb42" />
        </Lights>
        <Tab $w={400}>
          <TabInner $gap={4}>
            <svg width="32" height="30" viewBox="0 0 32 30">
              <path d="M0 12L16 0l16 12v18H0z" fill="#4a9cf0" />
              <path d="M0 12L16 0l16 12-16 12z" fill="#2246a8" />
              <path d="M9 12l5 6 9-11" fill="none" stroke="#fff" strokeWidth="3" />
            </svg>
            <TabLabel>Inbox – blondiebytes@gmai</TabLabel>
            <Cross color="#666" />
          </TabInner>
        </Tab>
        <Tab $w={408} $on>
          <TabInner $gap={9}>
            <svg width="22" height="28" viewBox="0 0 22 28" fill="#f2f2f2">
              <path d="M0 0h14l8 8v20H0z" />
            </svg>
            <TabLabel>https://aisapps.vassar.edu/</TabLabel>
            <Cross color="#8a7c7e" />
          </TabInner>
        </Tab>
        <NewTab />
      </TabStrip>

      <Toolbar>
        <NavIcon $ml={0} width="32" height="26" viewBox="0 0 32 26" fill="#f6f6f6">
          <path d="M14 0L0 13l14 13v-8h18V8H14z" />
        </NavIcon>
        <NavIcon $ml={23} width="32" height="26" viewBox="0 0 32 26" fill="#6b5357" stroke="#75605f" strokeWidth="1">
          <path d="M18 0l14 13-14 13v-8H0V8h18z" />
        </NavIcon>
        <NavIcon $ml={27} width="28" height="28" viewBox="0 0 28 28" fill="none" stroke="#f6f6f6" strokeWidth="5">
          <path d="M23 17a10 10 0 1 1-2-10" />
          <path d="M28 1v12H16z" fill="#f6f6f6" stroke="none" />
        </NavIcon>
        <Omnibox>
          <svg width="22" height="28" viewBox="0 0 22 28">
            <path d="M5 12V7a6 6 0 0 1 12 0v5" fill="none" stroke="#9a9a9a" strokeWidth="2.500" />
            <rect y="11" width="22" height="17" rx="1" fill="#a0d86c" stroke="#7fb050" />
          </svg>
          <UrlText>
            <UrlHttps>https</UrlHttps>://<UrlHost>aisapps.vassar.edu</UrlHost>/askbanner/Schclass_01.pdf
          </UrlText>
          <StarWrap width="36" height="34" viewBox="0 0 36 34">
            <path d="M18 1l5 12 12 1-9 8 3 11-11-6-11 6 3-11-9-8 12-1z" fill="#fff" stroke="#8a8a8a" strokeWidth="1.500" />
          </StarWrap>
        </Omnibox>
        <NavIcon $ml={22} width="35" height="35" viewBox="0 0 35 35">
          <path d="M10 0h15l10 10v15L25 35H10L0 25V10z" fill="#e5322c" stroke="#f6c4c0" strokeWidth="1" />
          <path d="M10 30c-2-4-4-8-4-12 0-2 3-2 4 0V8c0-2 3-2 3 0V5c0-2 3-2 3 0v1c0-2 3-2 3 0v2c0-2 3-2 3 0v4c0-2 3-2 3 0v8c0 4-1 7-3 10z" fill="#fff" />
        </NavIcon>
      </Toolbar>

      <Viewer>
        <FindBar>
          <FindField>
            psych
            <FindCount>4 of 20</FindCount>
          </FindField>
          <FindStep>
            <svg width="16" height="13" viewBox="0 0 16 13" fill="none" stroke="#fff" strokeWidth="3"><path d="M1 12l7-10 7 10" /></svg>
          </FindStep>
          <FindStep>
            <svg width="16" height="13" viewBox="0 0 16 13" fill="none" stroke="#fff" strokeWidth="3"><path d="M1 1l7 10 7-10" /></svg>
          </FindStep>
          <FindClose><Cross color="#75686a" /></FindClose>
        </FindBar>

        <Page $h={81} />

        <Page $h={1600}>
          <PageHead>
            <HeadItem $down={2}>Page 46</HeadItem>
            <HeadItem>Spring, 2015</HeadItem>
            <HeadItem $bold>Schedule of Classes</HeadItem>
            <HeadItem $down={15}>11/24/14</HeadItem>
          </PageHead>
          <PageTitle>Psychology</PageTitle>

          <Table>
            <Row $h={29} $head>
              <Cell $drop={1}>Course</Cell>
              <Cell />
              <Cell $drop={1}>Crse Title</Cell>
              <Cell $drop={1}>Unit</Cell>
              <Cell $drop={1}>Sch</Cell>
              <Cell $drop={1}>Day1</Cell>
              <Cell $drop={1}>Time1</Cell>
              <Cell $drop={1}>Loc1</Cell>
              <Cell $drop={1} $italic>Day2</Cell>
              <Cell $drop={1} $italic>Time2</Cell>
              <Cell $drop={1} $italic>Loc2</Cell>
              <Cell $drop={1}>Instrs</Cell>
              <Cell $small $drop={3}>LE</Cell>
              <Cell $small $drop={3}>SP</Cell>
              <Cell $small $drop={3}>NR</Cell>
              <Cell $small $drop={3}>YL</Cell>
              <Cell $small $drop={3}>PR</Cell>
              <Cell $small $drop={3}>QA</Cell>
              <Cell $small $drop={3}>FR</Cell>
            </Row>
            {COURSES.map((c) => (
              <Row key={c.code} $h={c.h}>
                <Cell>{c.sub ? `${c.code}\n${c.sub}` : c.code}</Cell>
                <Cell />
                <Cell>{c.title}</Cell>
                <Cell $right>1.0</Cell>
                <Cell>{c.picked ? <Picked>Lec</Picked> : 'Lec'}</Cell>
                <Cell $small>{c.day}</Cell>
                <Cell>{c.time}</Cell>
                <Cell />
                <Cell $small $italic>{c.day2}</Cell>
                <Cell $italic><NoWrap>{c.time2}</NoWrap></Cell>
                <Cell />
                <Cell>{c.instr}</Cell>
                <Cell $small>LE</Cell>
                <Cell />
                <Cell $small>{c.nr === false ? '' : 'NR'}</Cell>
                <Cell />
                <Cell />
                <Cell $small>{c.qa ? 'QA' : ''}</Cell>
                <Cell $small>{c.fr ? 'FR' : ''}</Cell>
              </Row>
            ))}
          </Table>
        </Page>
      </Viewer>
    </ChromeWindow>

    <Dock>
      {DOCK.map((d) => (
        <DockSlot key={d.id}>
          {d.art}
          <DockDot $on={d.dot} />
        </DockSlot>
      ))}
      <DockRule />
      <DockSlot>
        <Trash />
        <DockDot />
      </DockSlot>
    </Dock>
  </Desktop>
);

export default App;
